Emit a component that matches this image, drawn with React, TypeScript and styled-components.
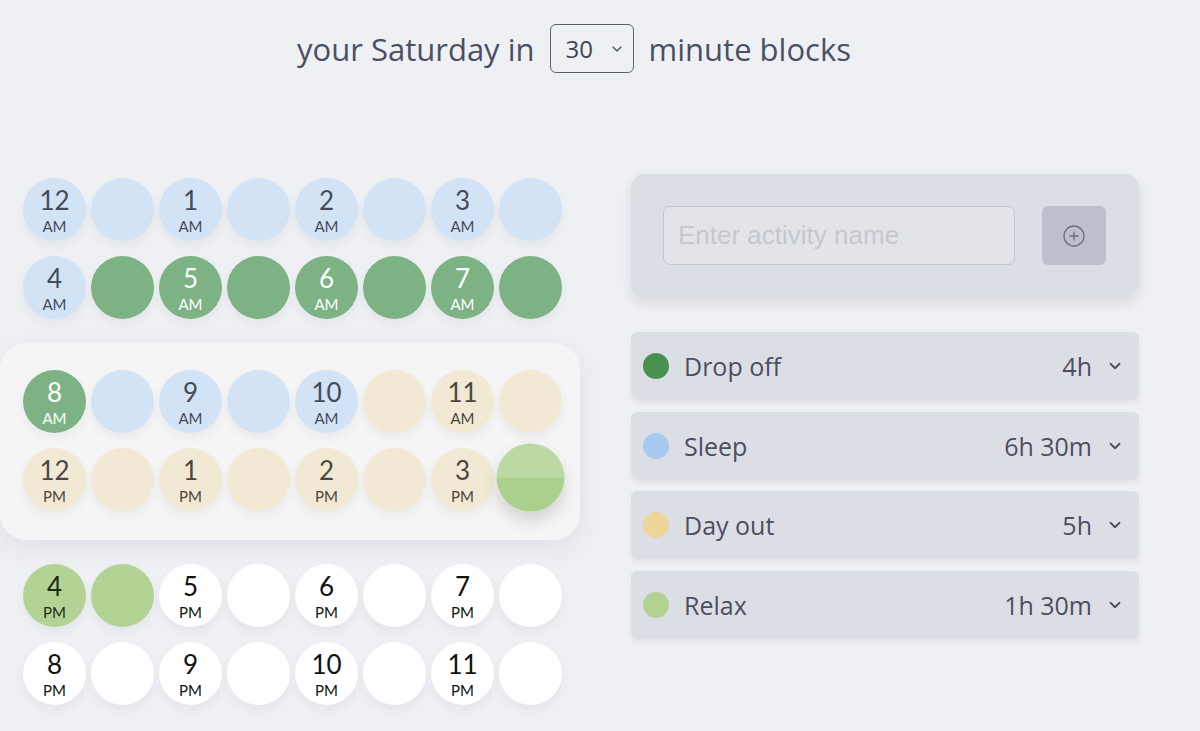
import React, { useState } from "react";
import styled, { createGlobalStyle } from "styled-components";
import { ChevronDown, CirclePlus } from "lucide-react";

type Activity = {
  id: string;
  name: string;
  dot: string;
  fill: string;
  ink: string;
  duration: string;
};

const activities: Activity[] = [
  { id: "drop", name: "Drop off", dot: "#4a9150", fill: "#7db384", ink: "#ffffff", duration: "4h" },
  { id: "sleep", name: "Sleep", dot: "#a9cbf1", fill: "#d3e3f6", ink: "#454b5a", duration: "6h 30m" },
  { id: "out", name: "Day out", dot: "#eed69b", fill: "#f2e9d4", ink: "#4a4640", duration: "5h" },
  { id: "relax", name: "Relax", dot: "#b1d38f", fill: "#b2d394", ink: "#1f2a1c", duration: "1h 30m" }
];

const byId = Object.fromEntries(activities.map(a => [a.id, a]));

// which activity owns each 30 minute slot
function slotOwner(i: number): string | null {
  if (i <= 8) return "sleep";
  if (i <= 16) return "drop";
  if (i <= 20) return "sleep";
  if (i <= 30) return "out";
  if (i <= 33) return "relax";
  return null;
}

const GlobalStyle = createGlobalStyle`
  body {
    margin: 0;
    background: #eff0f4;
    font-family: "Open Sans", "Noto Sans", sans-serif;
    color: #4a5064;
  }
`;

export default function App() {
  const [blocks, setBlocks] = useState("30");
  const slots = Array.from({ length: 48 }, (_, i) => i);
  const groups = [0, 1, 2].map(g => slots.slice(g * 16, g * 16 + 16));

  return (
    <Page>
      <GlobalStyle />
      <Header>
        your Saturday in
        <SelectWrap>
          <Select value={blocks} onChange={e => setBlocks(e.target.value)}>
            <option value="15">15</option>
            <option value="30">30</option>
            <option value="60">60</option>
          </Select>
          <SelectChevron>
            <ChevronDown size={16} strokeWidth={1.6} />
          </SelectChevron>
        </SelectWrap>
        minute blocks
      </Header>

      <Main>
        <Schedule>
          {groups.map((group, gi) => (
            <Group key={gi} $active={gi === 1}>
              {group.map(i => {
                const owner = slotOwner(i);
                const act = owner ? byId[owner] : null;
                const hour = Math.floor(i / 2);
                const h12 = hour % 12 === 0 ? 12 : hour % 12;
                const dragging = i === 31;
                return (
                  <Slot
                    key={i}
                    $fill={act ? act.fill : "#ffffff"}
                    $ink={act ? act.ink : "#111111"}
                    $dragging={dragging}
                  >
                    {i % 2 === 0 && (
                      <>
                        <Hour>{h12}</Hour>
                        <Meridiem>{hour < 12 ? "AM" : "PM"}</Meridiem>
                      </>
                    )}
                  </Slot>
                );
              })}
            </Group>
          ))}
        </Schedule>

        <Side>
          <AddCard>
            <NameInput placeholder="Enter activity name" />
            <AddButton aria-label="Add activity">
              <CirclePlus size={24} strokeWidth={1.3} />
            </AddButton>
          </AddCard>
          <List>
            {activities.map(a => (
              <Row key={a.id}>
                <Dot $color={a.dot} />
                <Name>{a.name}</Name>
                <Duration>{a.duration}</Duration>
                <ChevronDown size={18} strokeWidth={2.4} />
              </Row>
            ))}
          </List>
        </Side>
      </Main>
    </Page>
  );
}

const Page = styled.div`
  width: 1200px;
  height: 731px;
  overflow: hidden;
`;

const Header = styled.h1`
  margin: 0;
  padding: 24px 52px 0 0;
  display: flex;
  align-items: center;
  justify-content: center;
  gap: 15px;
  font-size: 31px;
  font-weight: 400;
  color: #4a5064;
  height: 49px;
`;

const SelectWrap = styled.div`
  position: relative;
  display: flex;
  align-items: center;
`;

const Select = styled.select`
  appearance: none;
  width: 84px;
  height: 49px;
  padding: 0 0 0 15px;
  border: 1px solid #5b6070;
  border-radius: 6px;
  background: transparent;
  font-family: "Open Sans", "Noto Sans", sans-serif;
  font-size: 24px;
  color: #3e4455;
`;

const SelectChevron = styled.span`
  position: absolute;
  right: 9px;
  top: 17px;
  display: flex;
  color: #3e4455;
  pointer-events: none;
`;

const Main = styled.div`
  display: grid;
  grid-template-columns: 580px 508px;
  column-gap: 51px;
  margin-top: 81px;
  align-items: start;
`;

const Schedule = styled.div`
  display: flex;
  flex-direction: column;
`;

const Group = styled.div<{ $active: boolean }>`
  display: grid;
  grid-template-columns: repeat(8, 63px);
  column-gap: 5px;
  row-gap: 15px;
  padding: ${p => (p.$active ? "27px 0 29px 23px" : "24px 0 24px 23px")};
  border-radius: 26px;
  background: ${p => (p.$active ? "#f5f5f6" : "transparent")};
  box-shadow: ${p => (p.$active ? "0 8px 24px rgba(60, 64, 80, 0.08)" : "none")};
`;

const Slot = styled.div<{ $fill: string; $ink: string; $dragging: boolean }>`
  width: 63px;
  height: 63px;
  border-radius: 50%;
  display: flex;
  flex-direction: column;
  align-items: center;
  justify-content: center;
  font-family: Lato, "Open Sans", sans-serif;
  color: ${p => p.$ink};
  background: ${p =>
    p.$dragging ? "linear-gradient(#bcd9a4 0 50%, #abd08b 50% 100%)" : p.$fill};
  box-shadow: ${p =>
    p.$dragging ? "0 8px 14px rgba(40, 60, 30, 0.18)" : "0 5px 10px rgba(60, 64, 80, 0.06)"};
  transform: ${p => (p.$dragging ? "translateY(-2px) scale(1.08)" : "none")};
`;

const Hour = styled.span`
  display: block;
  font-size: 26px;
  line-height: 1.2;
  margin-top: 1px;
`;

const Meridiem = styled.span`
  display: block;
  font-size: 15px;
  line-height: 1.2;
`;

const Side = styled.div`
  margin-top: 20px;
  display: flex;
  flex-direction: column;
  gap: 35px;
`;

const AddCard = styled.div`
  display: flex;
  align-items: center;
  gap: 27px;
  padding: 32px 33px 32px 32px;
  background: #dcdee5;
  border-radius: 14px;
  box-shadow: 0 6px 12px rgba(60, 64, 80, 0.12);
`;

const NameInput = styled.input`
  flex: 1;
  min-width: 0;
  height: 59px;
  box-sizing: border-box;
  padding: 0 14px;
  border: 1px solid #c3c6ce;
  border-radius: 7px;
  background: #e3e4ea;
  font-family: "Liberation Sans", Arial, sans-serif;
  font-size: 26px;
  color: #4a5064;
  &::placeholder {
    color: #c6c8ce;
  }
`;

const AddButton = styled.button`
  flex: 0 0 64px;
  width: 64px;
  height: 59px;
  border: none;
  border-radius: 6px;
  background: #bcbfcc;
  color: #6b6f7f;
  display: flex;
  align-items: center;
  justify-content: center;
  padding: 0;
`;

const List = styled.div`
  display: flex;
  flex-direction: column;
  gap: 11.5px;
`;

const Row = styled.div`
  height: 68px;
  display: flex;
  align-items: center;
  padding: 0 15px 0 12px;
  background: #dcdee5;
  border-radius: 6px;
  box-shadow: 0 3px 5px rgba(60, 64, 80, 0.07);
  color: #4b5061;
`;

const Dot = styled.span<{ $color: string }>`
  width: 26px;
  height: 26px;
  border-radius: 50%;
  background: ${p => p.$color};
  margin-right: 15px;
`;

const Name = styled.span`
  flex: 1;
  font-size: 25px;
`;

const Duration = styled.span`
  font-size: 25px;
  margin-right: 14px;
`;
